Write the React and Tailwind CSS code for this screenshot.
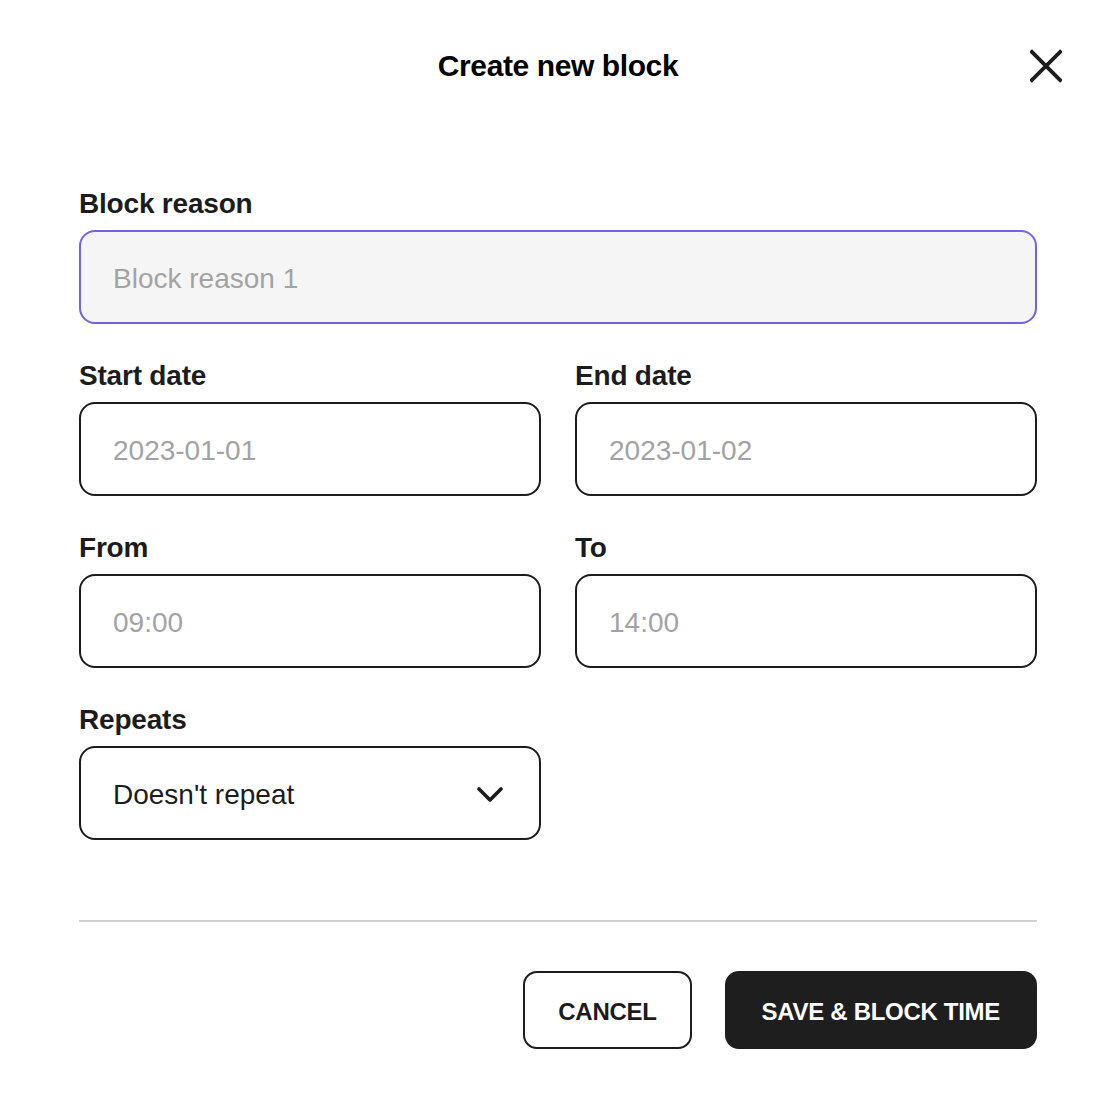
import { useState } from 'react'

function Field({ label, placeholder, highlighted }) {
  return (
    <div className="flex flex-col">
      <label className="text-[28px] leading-[34px] font-bold text-[#1c1c1c] mb-[9px] tracking-[-0.2px]">
        {label}
      </label>
      <input
        placeholder={placeholder}
        className={
          'h-[94px] w-full rounded-[16px] border-2 px-[32px] pt-[4px] text-[28px] text-[#1c1c1c] placeholder:text-[#a3a3a3] outline-none ' +
          (highlighted ? 'border-[#7263e3] bg-[#f5f5f5]' : 'border-[#1c1c1c] bg-white')
        }
      />
    </div>
  )
}

function App() {
  const [repeat] = useState("Doesn't repeat")

  return (
    <div className="min-h-screen bg-white font-['Liberation_Sans',Arial,sans-serif] text-[#1c1c1c]">

      <div className="flex items-center justify-between px-[54px] pt-[46px] h-[86px]">
        <div className="w-[32px]" />
        <h1 className="text-[30px] leading-[40px] font-bold text-black tracking-[-0.4px]">
          Create new block
        </h1>
        <button className="w-[32px] h-[32px] flex items-center justify-center">
          <svg width="34" height="34" viewBox="0 0 34 34" fill="none">
            <path d="M2 2 L32 32 M32 2 L2 32" stroke="#1c1c1c" strokeWidth="4" strokeLinecap="square" />
          </svg>
        </button>
      </div>

      <div className="px-[79px] pt-[101px]">

        <div className="flex flex-col gap-y-[35px]">
          <Field label="Block reason" placeholder="Block reason 1" highlighted />

          <div className="grid grid-cols-2 gap-x-[34px]">
            <Field label="Start date" placeholder="2023-01-01" />
            <Field label="End date" placeholder="2023-01-02" />
          </div>

          <div className="grid grid-cols-2 gap-x-[34px]">
            <Field label="From" placeholder="09:00" />
            <Field label="To" placeholder="14:00" />
          </div>

          <div className="grid grid-cols-2 gap-x-[34px]">
            <div className="flex flex-col">
              <label className="text-[28px] leading-[34px] font-bold text-[#1c1c1c] mb-[9px] tracking-[-0.2px]">
                Repeats
              </label>
              <div className="h-[94px] rounded-[16px] border-2 border-[#1c1c1c] pl-[32px] pr-[36px] pt-[4px] flex items-center justify-between">
                <span className="text-[28px] text-[#1c1c1c]">{repeat}</span>
                <svg width="26" height="16" viewBox="0 0 26 16" fill="none">
                  <path d="M2 2 L13 13 L24 2" stroke="#1c1c1c" strokeWidth="3.6" strokeLinecap="round" strokeLinejoin="round" />
                </svg>
              </div>
            </div>
          </div>
        </div>

        <div className="mt-[80px] h-[2px] bg-[#d2d2d2]" />

        <div className="flex justify-end gap-x-[33px] pt-[49px] pb-[56px]">
          <button className="h-[78px] px-[33px] pt-[3px] rounded-[14px] border-2 border-[#1c1c1c] bg-white text-[24px] font-bold text-[#1c1c1c] tracking-[-0.3px]">
            CANCEL
          </button>
          <button className="h-[78px] px-[37px] pt-[3px] rounded-[14px] bg-[#1e1e1e] text-[24px] font-bold text-white tracking-[-0.3px]">
            SAVE &amp; BLOCK TIME
          </button>
        </div>

      </div>
    </div>
  )
}

export default App
